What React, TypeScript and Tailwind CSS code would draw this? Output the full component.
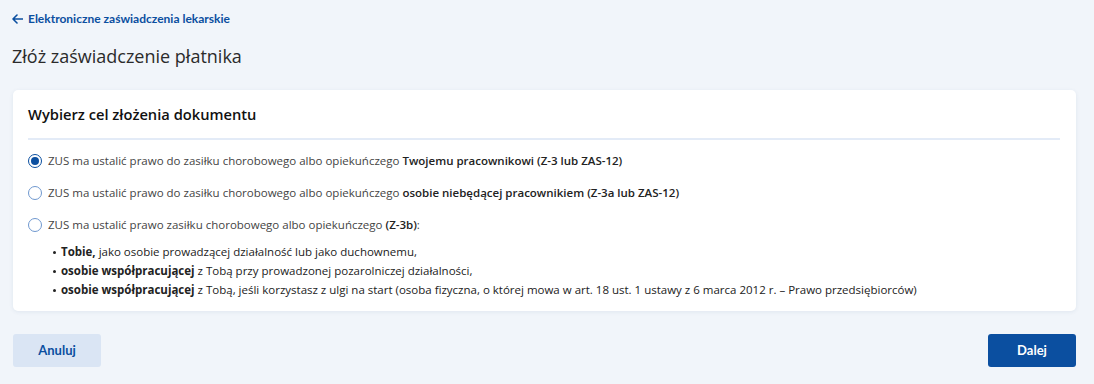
import React from "react";

const body = { fontFamily: '"Open Sans", "Liberation Sans", sans-serif' };
const cal = { fontFamily: 'Lato, "Open Sans", sans-serif' };

function Radio({ checked }: { checked?: boolean }) {
  return (
    <span
      className={
        "flex h-[14px] w-[14px] shrink-0 items-center justify-center rounded-full border bg-white " +
        (checked ? "border-[#0b4fa0] border-[1.5px]" : "border-[#6f98cf]")
      }
    >
      {checked && <span className="h-[8px] w-[8px] rounded-full bg-[#0b4fa0]" />}
    </span>
  );
}

export default function App() {
  return (
    <div className="min-h-[384px] w-full bg-[#f1f5fa] text-[#333]" style={body}>
      <div className="px-[12px] pt-[10px]">
        <a className="flex items-center gap-[5px] text-[12px] font-bold text-[#0b4fa0]" style={cal}>
          <svg width="11" height="10" viewBox="0 0 11 10" fill="none">
            <path d="M5 1 1 5l4 4M1 5h9.5" stroke="#0b4fa0" strokeWidth="1.6" strokeLinecap="round" strokeLinejoin="round" />
          </svg>
          <span>Elektroniczne zaświadczenia lekarskie</span>
        </a>
        <h1 className="mt-[16px] text-[18px] font-normal leading-[24px] text-[#2b2b2b]">Złóż zaświadczenie płatnika</h1>

        <div className="mt-[22px] ml-[1px] mr-[6px] rounded-[5px] bg-white px-[15px] pb-[12px] pt-[13px] shadow-[0_1px_4px_rgba(30,60,110,0.08)]">
          <h2 className="text-[14.7px] font-semibold leading-[22px] text-[#111]">Wybierz cel złożenia dokumentu</h2>
          <div className="mt-[13px] mr-[1px] h-[2px] bg-[#e3ebf7]" />
          <div className="mt-[12px] flex flex-col gap-[14px] text-[11.5px] leading-[18px] text-[#444]">
            <label className="flex items-center gap-[6px]">
              <Radio checked />
              <span>
                ZUS ma ustalić prawo do zasiłku chorobowego albo opiekuńczego{" "}
                <b className="font-semibold text-[#222]">Twojemu pracownikowi (Z-3 lub ZAS-12)</b>
              </span>
            </label>
            <label className="flex items-center gap-[6px]">
              <Radio />
              <span>
                ZUS ma ustalić prawo do zasiłku chorobowego albo opiekuńczego{" "}
                <b className="font-semibold text-[#222]">osobie niebędącej pracownikiem (Z-3a lub ZAS-12)</b>
              </span>
            </label>
            <div>
              <label className="flex items-center gap-[6px]">
                <Radio />
                <span>
                  ZUS ma ustalić prawo zasiłku chorobowego albo opiekuńczego{" "}
                  <b className="font-semibold text-[#222]">(Z-3b)</b>:
                </span>
              </label>
              <ul className="mt-[9px] ml-[25px] flex flex-col gap-[1px] text-[#222]">
                <li className="flex items-center gap-[5px]">
                  <span className="h-[3px] w-[3px] rounded-full bg-[#222]" />
                  <span><b className="font-bold">Tobie,</b> jako osobie prowadzącej działalność lub jako duchownemu,</span>
                </li>
                <li className="flex items-center gap-[5px]">
                  <span className="h-[3px] w-[3px] rounded-full bg-[#222]" />
                  <span><b className="font-bold">osobie współpracującej</b> z Tobą przy prowadzonej pozarolniczej działalności,</span>
                </li>
                <li className="flex items-center gap-[5px]">
                  <span className="h-[3px] w-[3px] rounded-full bg-[#222]" />
                  <span>
                    <b className="font-bold">osobie współpracującej</b> z Tobą, jeśli korzystasz z ulgi na start (osoba fizyczna, o której mowa w art. 18 ust. 1 ustawy z 6 marca 2012 r. – Prawo przedsiębiorców)
                  </span>
                </li>
              </ul>
            </div>
          </div>
        </div>

        <div className="mt-[23px] mr-[6px] flex items-center justify-between pl-[1px]">
          <button className="h-[33px] w-[88px] rounded-[3px] bg-[#dae5f4] text-[13px] font-bold text-[#0b4fa0]" style={cal}>
            Anuluj
          </button>
          <button className="h-[33px] w-[88px] rounded-[3px] bg-[#0b4fa0] text-[13px] font-bold text-white" style={cal}>
            Dalej
          </button>
        </div>
      </div>
    </div>
  );
}
